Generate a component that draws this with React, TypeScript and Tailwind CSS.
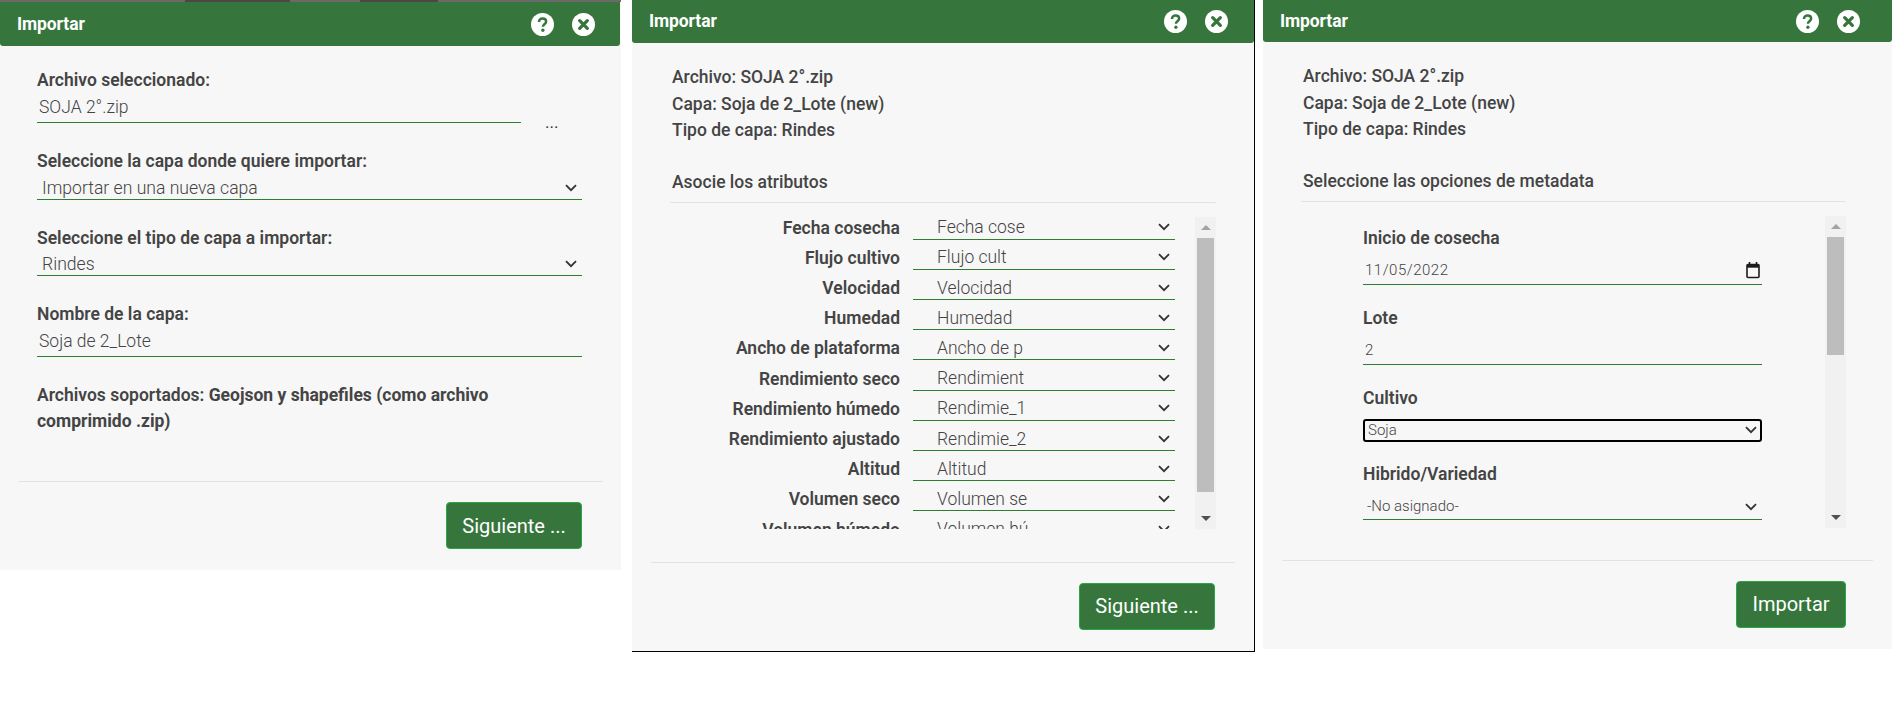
const mappings = [
  ["Fecha cosecha", "Fecha cose"],
  ["Flujo cultivo", "Flujo cult"],
  ["Velocidad", "Velocidad"],
  ["Humedad", "Humedad"],
  ["Ancho de plataforma", "Ancho de p"],
  ["Rendimiento seco", "Rendimient"],
  ["Rendimiento húmedo", "Rendimie_1"],
  ["Rendimiento ajustado", "Rendimie_2"],
  ["Altitud", "Altitud"],
  ["Volumen seco", "Volumen se"],
  ["Volumen húmedo", "Volumen hú"],
];

function Chevron() {
  return (
    <svg viewBox="0 0 12 8" className="h-[8px] w-[12px] shrink-0 text-[#333]" fill="none" stroke="currentColor" strokeWidth="1.8">
      <path d="M1 1.2 6 6.2 11 1.2" />
    </svg>
  );
}

function CalendarIcon() {
  return (
    <svg viewBox="0 0 14 17" className="h-[17px] w-[14px]" fill="none" stroke="#1c1c1c">
      <path d="M3.5 0v3M10.5 0v3" strokeWidth="1.6" />
      <rect x="1" y="2.5" width="12" height="13" rx="1" strokeWidth="1.6" />
      <path d="M1 4.2h12" strokeWidth="3" />
    </svg>
  );
}

function HeaderIcons() {
  return (
    <div className="flex items-center gap-[18px]">
      <svg viewBox="0 0 24 24" className="h-[23px] w-[23px]">
        <circle cx="12" cy="12" r="12" fill="#fff" />
        <path d="M8.3 9.3c0-2.2 1.7-3.6 3.8-3.6s3.7 1.3 3.7 3.2c0 2.8-3.4 2.9-3.4 5.4" fill="none" stroke="#36763d" strokeWidth="2.6" />
        <circle cx="12.4" cy="18" r="1.7" fill="#36763d" />
      </svg>
      <svg viewBox="0 0 24 24" className="h-[23px] w-[23px]">
        <circle cx="12" cy="12" r="12" fill="#fff" />
        <path d="M8 8l8 8M16 8l-8 8" fill="none" stroke="#36763d" strokeWidth="3.4" strokeLinecap="round" />
      </svg>
    </div>
  );
}

function Header({ className }: { className: string }) {
  return (
    <header className={`flex items-center justify-between rounded-b-[3px] bg-[#36763d] pl-[17px] ${className}`}>
      <h1 className="text-[17.5px] font-bold tracking-[-0.1px] text-white">Importar</h1>
      <HeaderIcons />
    </header>
  );
}

function Label({ children }: { children: React.ReactNode }) {
  return <label className="block text-[17.5px] leading-[26px] font-semibold text-[#444]">{children}</label>;
}

function SelectBox({ value, className }: { value: string; className: string }) {
  return (
    <div className={`flex items-center justify-between border-b border-[#2e7d32] ${className}`}>
      <span className="font-light text-[#444]">{value}</span>
      <Chevron />
    </div>
  );
}

function InputLine({ value, className }: { value: string; className: string }) {
  return (
    <div className={`border-b border-[#2e7d32] ${className}`}>
      <span className="font-light text-[#444]">{value}</span>
    </div>
  );
}

function Divider({ className }: { className: string }) {
  return <div className={`h-px rounded-full bg-[#e3e3e3] ${className}`} />;
}

function ActionButton({ children, className }: { children: React.ReactNode; className: string }) {
  return (
    <button className={`h-[47px] rounded-[4px] border border-[#28a745] bg-[#36763d] text-[20px] text-white ${className}`}>
      {children}
    </button>
  );
}

function Scrollbar({ thumb }: { thumb: string }) {
  return (
    <div className="flex w-[21px] shrink-0 flex-col items-center bg-[#f1f1f1]">
      <div className="flex h-[21px] items-center justify-center">
        <div className="h-0 w-0 border-x-[5px] border-b-[5px] border-x-transparent border-b-[#a3a3a3]" />
      </div>
      <div className={`w-[17px] bg-[#bdbdbd] ${thumb}`} />
      <div className="flex-1" />
      <div className="flex h-[21px] items-center justify-center">
        <div className="h-0 w-0 border-x-[5px] border-t-[5px] border-x-transparent border-t-[#505050]" />
      </div>
    </div>
  );
}

function Summary() {
  return (
    <div className="mb-[25px] pl-[2px] text-[17.5px] leading-[26.5px] font-medium text-[#444]">
      <p>Archivo: SOJA 2°.zip</p>
      <p>Capa: Soja de 2_Lote (new)</p>
      <p>Tipo de capa: Rindes</p>
    </div>
  );
}

function SectionTitle({ children }: { children: React.ReactNode }) {
  return <h2 className="pl-[2px] text-[17.5px] leading-[26px] font-medium text-[#444]">{children}</h2>;
}

function FilePanel() {
  return (
    <section className="flex h-[570px] w-[621px] shrink-0 flex-col bg-[#f7f7f7]">
      {/* borde de la ventana de atras */}
      <div className="flex h-[2px] bg-[#6a6a6a]">
        <div className="ml-[185px] w-[105px] bg-[#484848]" />
        <div className="ml-[70px] w-[78px] bg-[#484848]" />
      </div>
      <Header className="mr-[1px] h-[44px] pr-[25px]" />
      <div className="px-[37px] pt-[21px]">
        <Label>Archivo seleccionado:</Label>
        <div className="flex items-end">
          <InputLine value="SOJA 2°.zip" className="h-[30px] w-[484px] pl-[2px] text-[17.5px] leading-[29px]" />
          <span className="ml-[24px] mb-[-6px] text-[17px] leading-[14px] text-[#333]">...</span>
        </div>
        <div className="mt-[25px]"><Label>Seleccione la capa donde quiere importar:</Label></div>
        <SelectBox value="Importar en una nueva capa" className="h-[26px] w-[545px] px-[5px] pt-[3px] text-[17.6px]" />
        <div className="mt-[25px]"><Label>Seleccione el tipo de capa a importar:</Label></div>
        <SelectBox value="Rindes" className="h-[25px] w-[545px] px-[5px] pt-[2px] text-[17.6px]" />
        <div className="mt-[25px]"><Label>Nombre de la capa:</Label></div>
        <InputLine value="Soja de 2_Lote" className="h-[30px] w-[545px] pl-[2px] text-[17.5px] leading-[29px]" />
        <p className="mt-[25px] w-[510px] text-[17.5px] leading-[26px] font-semibold text-[#444]">
          Archivos soportados: <span className="font-bold">Geojson y shapefiles (como archivo comprimido .zip)</span>
        </p>
      </div>
      <Divider className="mx-[18px] mt-[47px]" />
      <div className="mt-[20px] flex justify-end pr-[39px]">
        <ActionButton className="w-[136px]">Siguiente ...</ActionButton>
      </div>
    </section>
  );
}

function MappingPanel() {
  return (
    <section className="ml-[11px] flex h-[652px] w-[623px] shrink-0 flex-col border-r border-b border-black bg-[#f7f7f7]">
      <Header className="h-[43px] pr-[26px]" />
      <div className="px-[38px] pt-[21px]">
        <Summary />
        <SectionTitle>Asocie los atributos</SectionTitle>
        <Divider className="mt-[7px]" />
        <div className="mt-[14px] flex h-[312px] overflow-hidden">
          <div className="-mt-[7px] min-w-0 flex-1">
            {mappings.map(([label, value]) => (
              <div key={label} className="flex h-[30.2px] items-end">
                <span className="w-[230px] text-right text-[17.5px] leading-[24px] font-semibold text-[#444]">{label}</span>
                <SelectBox value={value} className="ml-[13px] h-[26px] w-[262px] pl-[24px] pr-[5px] pt-[2px] text-[17.5px] leading-[24px]" />
              </div>
            ))}
          </div>
          <Scrollbar thumb="h-[254px]" />
        </div>
      </div>
      <Divider className="mx-[19px] mt-[33px]" />
      <div className="mt-[20px] flex justify-end pr-[39px]">
        <ActionButton className="w-[136px]">Siguiente ...</ActionButton>
      </div>
    </section>
  );
}

function MetadataField({ label, className, children }: { label: string; className: string; children: React.ReactNode }) {
  return (
    <div className={className}>
      <Label>{label}</Label>
      {children}
    </div>
  );
}

function MetadataPanel() {
  return (
    <section className="ml-[8px] flex h-[649px] w-[629px] shrink-0 flex-col bg-[#f7f7f7]">
      <Header className="h-[42px] pr-[32px]" />
      <div className="pl-[38px] pr-[46px] pt-[21px]">
        <Summary />
        <SectionTitle>Seleccione las opciones de metadata</SectionTitle>
        <Divider className="mt-[7px]" />
        <div className="mt-[14px] flex h-[312px] overflow-hidden">
          <div className="min-w-0 flex-1 overflow-hidden pl-[62px] pt-[9px]">
            <div className="w-[399px]">
              <MetadataField label="Inicio de cosecha" className="mb-[20px]">
                <div className="mt-[6px] flex h-[28px] items-center justify-between border-b border-[#2e7d32] px-[2px] text-[15px] tracking-[0.5px]">
                  <span className="font-light text-[#444]">11/05/2022</span>
                  <CalendarIcon />
                </div>
              </MetadataField>
              <MetadataField label="Lote" className="mb-[20px]">
                <InputLine value="2" className="mt-[6px] h-[28px] pl-[2px] text-[15px] leading-[27px]" />
              </MetadataField>
              <MetadataField label="Cultivo" className="mb-[19px]">
                <div className="mt-[8px] flex h-[23px] items-center justify-between rounded-[3px] border-2 border-black px-[3px] text-[15px]">
                  <span className="font-light text-[#444]">Soja</span>
                  <Chevron />
                </div>
              </MetadataField>
              <MetadataField label="Hibrido/Variedad" className="mb-[20px]">
                <SelectBox value="-No asignado-" className="mt-[6px] h-[27px] pl-[4px] pr-[5px] pt-[2px] text-[15px]" />
              </MetadataField>
            </div>
          </div>
          <Scrollbar thumb="h-[118px]" />
        </div>
      </div>
      <Divider className="mx-[19px] mt-[32px]" />
      <div className="mt-[20px] flex justify-end pr-[46px]">
        <ActionButton className="w-[110px]">Importar</ActionButton>
      </div>
    </section>
  );
}

export default function App() {
  return (
    <div className="flex h-[703px] w-[1892px] items-start overflow-hidden bg-white font-[Roboto,sans-serif]">
      <FilePanel />
      <MappingPanel />
      <MetadataPanel />
    </div>
  );
}
